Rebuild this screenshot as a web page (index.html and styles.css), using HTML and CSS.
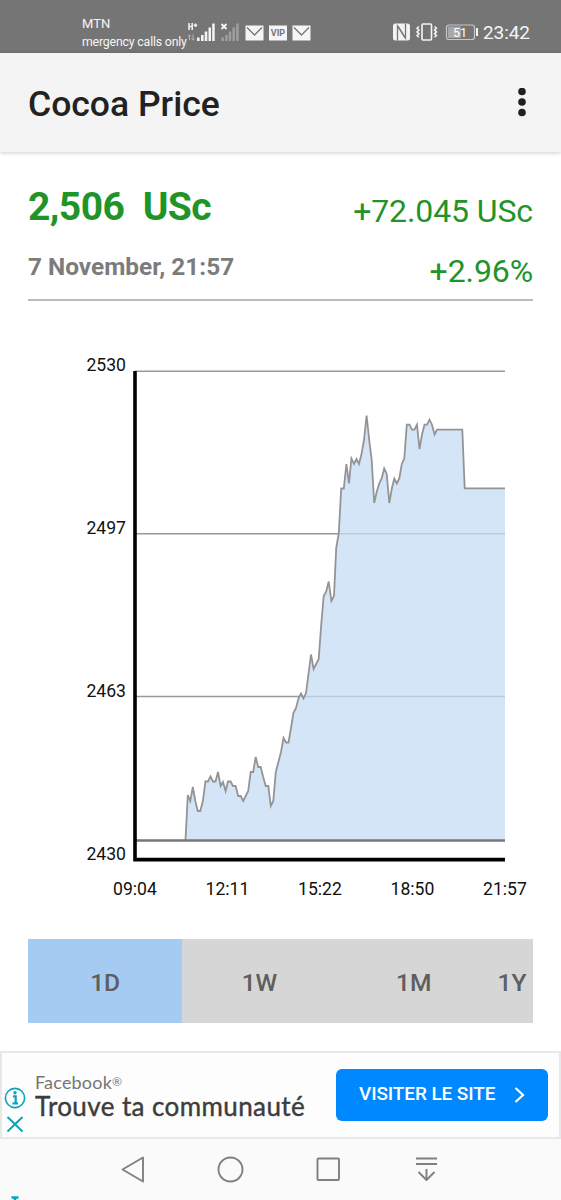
FILE: index.html
```html
<!DOCTYPE html>
<html lang="en">
<head>
  <meta charset="UTF-8">
  <meta name="viewport" content="width=device-width, initial-scale=1">
  <title>Cocoa Price</title>
  <link rel="stylesheet" href="styles.css">
</head>
<body>

  <div class="status-bar">
    <div class="carrier">
      <div>MTN</div>
      <div class="carrier-line"><span>mergency calls only</span></div>
    </div>
    <svg class="signal-icons" width="126" height="22" viewBox="0 0 126 22">
      <!-- signal, H+ -->
      <g stroke="#f0f0f0" stroke-width="1.6" fill="none">
        <path d="M2 2v7M5.2 2v7M2 5.5h3.2M6.8 4.2h3.4M8.5 2.5v3.4"/>
        <path d="M2.500 14v5M1 15.500l1.500-1.700 1.500 1.700M6 13.500v5.500M4.500 17.500l1.500 1.700 1.500-1.700" stroke="#b5b5b5" stroke-width="1"/>
      </g>
      <path fill="#f5f5f5" d="M10 16.500h2.600V20H10zM14 14h2.600v6H14zM17.700 10.500h2.600V20h-2.600zM21.500 6.500h2.500V20h-2.500zM25.200 2.500h2.500V20h-2.500z"/>
      <!-- no signal -->
      <path stroke="#f5f5f5" stroke-width="1.900" d="M34.500 3l5 5M39.500 3l-5 5"/>
      <path fill="#a0a0a0" d="M34.500 16.500h2.400V20h-2.400zM38.200 14h2.400v6h-2.400zM41.800 10.500h2.400V20h-2.400zM45.500 6.500h2.400V20h-2.400zM49.200 2.500h2.400V20h-2.400z"/>
      <!-- mails -->
      <rect x="58.500" y="4.500" width="18" height="15" fill="#f5f5f5"/>
      <path d="M60 6.500l7.500 7.500L75 6.500" fill="none" stroke="#777" stroke-width="1.300"/>
      <rect x="82" y="4.500" width="18" height="15" fill="#f5f5f5"/>
      <text x="91" y="15.300" class="vip">VIP</text>
      <rect x="105.500" y="4.500" width="18" height="15" fill="#f5f5f5"/>
      <path d="M107 6.500l7.500 7.500 7.500-7.500" fill="none" stroke="#777" stroke-width="1.300"/>
    </svg>
    <svg class="system-icons" width="87" height="20" viewBox="0 0 87 20">
      <!-- nfc -->
      <rect x="1" y="1.500" width="17" height="17" rx="2.500" fill="#f3f3f3"/>
      <path d="M5.500 18.500V4l7.500 12M13.500 1.500V16L6 4" fill="none" stroke="#777" stroke-width="1.300"/>
      <!-- vibrate -->
      <rect x="30" y="2" width="9.500" height="16" rx="1" fill="none" stroke="#f5f5f5" stroke-width="1.600"/>
      <path d="M27 4.500l-2 1.800 2 1.800-2 1.800 2 1.800-2 1.800 2 1.800M42.500 4.500l2 1.800-2 1.800 2 1.800-2 1.800 2 1.800-2 1.800" fill="none" stroke="#f5f5f5" stroke-width="1.500"/>
      <!-- battery -->
      <rect x="54.500" y="3" width="28" height="14.500" rx="2.500" fill="none" stroke="#c8c8c8" stroke-width="1.200"/>
      <rect x="56" y="4.500" width="13" height="11.500" fill="#a8a8a8"/>
      <rect x="84" y="6" width="2" height="8" fill="#f5f5f5"/>
      <text x="68" y="14.600" class="battery">51</text>
    </svg>
    <div class="clock">23:42</div>
  </div>

  <div class="header">
    <h1>Cocoa Price</h1>
    <svg width="10" height="30" viewBox="0 0 10 30" fill="#202020">
      <circle cx="5" cy="3.500" r="3.800"/>
      <circle cx="5" cy="14" r="3.800"/>
      <circle cx="5" cy="24.500" r="3.800"/>
    </svg>
  </div>

  <div class="quote">
    <div class="quote-left">
      <div class="price">2,506&nbsp; USc</div>
      <div class="date">7 November, 21:57</div>
    </div>
    <div class="quote-right">
      <div>+72.045 USc</div>
      <div>+2.96%</div>
    </div>
  </div>

  <svg class="chart" width="561" height="600" viewBox="0 320 561 600">
    <path class="grid" d="M135 371.200H505M135 533.800H505M135 696.600H505"/>
    <path class="area" id="area"/>
    <path class="line" id="line"/>
    <path class="base" d="M135 840.500H505"/>
    <path class="axis" d="M135 371V859.600H505"/>
    <g class="y-labels">
      <text x="126" y="371.300">2530</text>
      <text x="126" y="534.300">2497</text>
      <text x="126" y="697.300">2463</text>
      <text x="126" y="859.800">2430</text>
    </g>
    <g class="x-labels">
      <text x="135" y="895.300">09:04</text>
      <text x="227.500" y="895.300">12:11</text>
      <text x="320" y="895.300">15:22</text>
      <text x="412.500" y="895.300">18:50</text>
      <text x="505" y="895.300">21:57</text>
    </g>
  </svg>

  <div class="ranges">
    <div class="range active">1D</div>
    <div class="range">1W</div>
    <div class="range">1M</div>
    <div class="range">1Y</div>
  </div>

  <div class="ad">
    <div class="ad-marks">
      <svg width="22" height="48" viewBox="0 0 22 48" fill="none" stroke="#0aa5bd">
        <circle cx="11" cy="11" r="9.600" stroke-width="1.600"/>
        <path d="M9 9.300h2.700v7M8.500 16.300h5.500" stroke-width="2.200"/>
        <circle cx="11" cy="5.700" r="1.700" fill="#0aa5bd" stroke="none"/>
        <path d="M3.500 30l15 14.500M18.500 30l-15 14.500" stroke-width="2"/>
      </svg>
    </div>
    <div class="ad-text">
      <div class="ad-brand">Facebook<span>®</span></div>
      <div class="ad-title">Trouve ta communauté</div>
    </div>
    <div class="ad-btn">
      <span>VISITER LE SITE</span>
      <svg width="12" height="18" viewBox="0 0 12 18"><path d="M1.500 2l7.500 7-7.500 7" fill="none" stroke="#fff" stroke-width="2.200"/></svg>
    </div>
  </div>

  <div class="nav-bar">
    <svg width="561" height="61" viewBox="0 0 561 61" fill="none" stroke="#808080" stroke-width="1.900" stroke-linejoin="round">
      <path d="M122.500 30.500L143 18.500V42.500z"/>
      <circle cx="230.500" cy="30.500" r="12"/>
      <rect x="317.500" y="19.500" width="21.500" height="21.500" rx="1"/>
      <path d="M416 19.500h21M416 25h21M426.500 30v11M418.500 33l8 8 8-8"/>
      <path d="M11.500 58.500h7M15 58.500v2.500" stroke="#0aa5bd" stroke-width="2.500"/>
    </svg>
  </div>

  <script>
    // chart points, x and y
    const points = [
      [185.5, 840], [187.800, 795], [190.300, 801], [192.800, 787], [195.300, 801], [197.800, 811], [200.300, 811],
      [202.900, 801], [205.400, 781.500], [208, 781.500], [210.500, 776.500], [213, 781.500], [215.500, 781.500],
      [218, 772], [220.600, 786], [223, 782], [225.600, 791], [228, 781.500], [230.600, 781.500], [233, 786],
      [235.600, 786], [238.200, 796], [240.700, 796], [243.200, 801], [245.700, 796], [248.200, 791], [250.700, 772],
      [253.200, 772], [255.700, 757], [258.200, 767], [260.700, 767], [263.200, 777], [265.700, 786], [268.300, 786],
      [270.800, 806], [273.300, 801], [275.800, 772], [278.400, 762], [281, 752], [283.500, 738], [286, 742.500],
      [288.500, 742.500], [291, 728], [293.400, 713], [296, 708], [298.600, 698], [301, 693.500], [303.500, 698.500],
      [306, 693], [308.500, 674], [311, 654.500], [313.600, 669], [316.200, 664], [318.700, 659], [321.200, 625],
      [323.700, 596], [326.200, 591.500], [328.700, 581.500], [331.400, 601], [334, 596], [336.200, 548], [338.800, 533],
      [341.200, 488.500], [343.800, 488.500], [346.400, 464], [349, 483.500], [351.400, 458.500], [354, 464],
      [356.500, 459], [359, 464], [361.500, 454], [364, 440], [366.600, 415.500], [369.200, 440], [371.700, 460],
      [374.200, 503], [376.700, 492], [379.200, 483.500], [381.700, 478.500], [384.200, 468.500], [386.700, 474],
      [389.300, 503], [391.800, 488.500], [394.300, 478.500], [396.800, 483.500], [399.300, 478.500], [401.800, 464],
      [404.300, 458.500], [406.800, 424.700], [409.400, 424.700], [411.900, 429.700], [414.400, 429.700], [417, 424.700],
      [419.500, 449], [422, 434.500], [424.500, 424.700], [427, 424.700], [429.500, 419.700], [432, 424.700],
      [434.600, 434.500], [437, 429.700], [462.300, 429.700], [464.700, 488.300], [505, 488.300]
    ];

    const d = 'M' + points.map(p => p.join(' ')).join('L');
    document.getElementById('line').setAttribute('d', d);
    document.getElementById('area').setAttribute('d', d + 'V840H185.5Z');
  </script>
</body>
</html>
```
FILE: styles.css
```css
body {
  margin: 0;
  width: 561px;
  height: 1200px;
  overflow: hidden;
  font-family: Roboto, "Liberation Sans", sans-serif;
  background: #fff;
  color: #222;
}
svg {
  display: block;
  flex-shrink: 0;
}
.status-bar {
  display: flex;
  height: 53px;
  background: #757575;
  color: #f5f5f5;
}
.carrier {
  width: 104px;
  margin-left: 82px;
  padding-top: 15px;
  font-size: 13px;
  line-height: 18px;
}
.carrier-line {
  white-space: nowrap;
  font-size: 12.3px;
  letter-spacing: -0.17px;
}
.signal-icons {
  margin: 21px 0 0 1px;
}
.vip {
  font-size: 9px;
  font-weight: 700;
  text-anchor: middle;
  fill: #777;
}
.system-icons {
  margin: 22px 0 0 79px;
}
.battery {
  font-size: 12.5px;
  text-anchor: middle;
  fill: #fff;
}
.clock {
  margin-left: 4px;
  padding-top: 21px;
  font-size: 19px;
  line-height: 24px;
  letter-spacing: -0.1px;
}
.header {
  display: flex;
  justify-content: space-between;
  align-items: center;
  height: 99px;
  padding: 0 34px 0 28px;
  box-sizing: border-box;
  background: #f4f4f4;
  box-shadow: 0 1px 4px rgba(0,0,0,0.2);
}
.header h1 {
  margin: 3px 0 0 0;
  font-size: 35.5px;
  font-weight: 500;
}
.quote {
  display: flex;
  justify-content: space-between;
  height: 149px;
  margin: 0 28px;
  border-bottom: 2px solid #bbb;
  box-sizing: border-box;
  color: #1f9429;
}
.price {
  margin-top: 32px;
  font-size: 39px;
  font-weight: 700;
  line-height: 46px;
  letter-spacing: -0.55px;
}
.date {
  margin-top: 21px;
  font-size: 24.4px;
  font-weight: 700;
  line-height: 32px;
  color: #7c7c7c;
}
.quote-right {
  padding-top: 29px;
  font-size: 32px;
  line-height: 60px;
  letter-spacing: -0.1px;
  text-align: right;
}
.chart {
  margin: 19px 0 19px;
}
.grid {
  stroke: #999;
  stroke-width: 1.5;
}
.area {
  fill: rgba(198, 220, 244, 0.75);
}
.line {
  fill: none;
  stroke: #949494;
  stroke-width: 1.8;
}
.base {
  stroke: #777;
  stroke-width: 2.3;
}
.axis {
  fill: none;
  stroke: #000;
  stroke-width: 3.6;
}
.y-labels, .x-labels {
  font-size: 17.6px;
  fill: #111;
}
.y-labels {
  text-anchor: end;
}
.x-labels {
  text-anchor: middle;
}
.ranges {
  display: flex;
  height: 84px;
  margin: 0 28px;
  overflow: hidden;
  background: #d6d6d6;
}
.range {
  flex: 0 0 154.3px;
  text-align: center;
  font-size: 24.6px;
  font-weight: 500;
  line-height: 87px;
  color: #5e5e5e;
}
.range:last-child {
  flex: 1;
}
.range.active {
  background: #a6cbf3;
}
.ad {
  display: flex;
  height: 88px;
  margin-top: 28px;
  box-sizing: border-box;
  border: 2px solid #e8e8e8;
  background: #fdfdfd;
}
.ad-marks {
  width: 22px;
  margin: 34px 0 0 2px;
}
.ad-text {
  width: 301px;
  margin: 18px 0 0 9px;
  font-family: Lato, sans-serif;
  white-space: nowrap;
}
.ad-brand {
  font-size: 18px;
  line-height: 22px;
  letter-spacing: 0.2px;
  color: #757575;
}
.ad-brand span {
  font-size: 12px;
  line-height: 12px;
  vertical-align: 3px;
}
.ad-title {
  font-size: 26px;
  line-height: 26px;
  letter-spacing: 0.4px;
  color: #3c3c3c;
  -webkit-text-stroke: 0.4px #3c3c3c;
}
.ad-btn {
  display: flex;
  align-items: center;
  justify-content: space-between;
  width: 212px;
  height: 52px;
  margin-top: 16px;
  padding: 0 22px 0 23px;
  box-sizing: border-box;
  border-radius: 6px;
  background: #0088ff;
  color: #fff;
  font-size: 19px;
  font-weight: 500;
}
.ad-btn span {
  margin-top: -3px;
  letter-spacing: -0.1px;
}
.nav-bar {
  height: 61px;
  background: #fafafa;
}
```
